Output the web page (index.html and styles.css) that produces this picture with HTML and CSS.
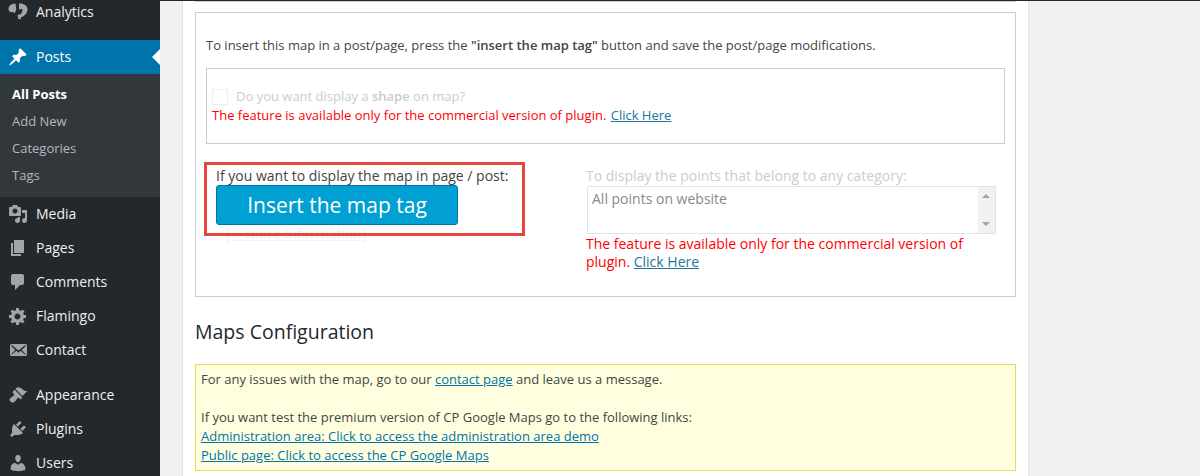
FILE: index.html
```html
<!DOCTYPE html>
<html lang="en">
<head>
<meta charset="utf-8">
<title>Maps</title>
<link rel="stylesheet" href="styles.css">
</head>
<body>
<div class="page">
<nav class="side">
  <a class="item first"><svg class="ic" viewBox="0 0 20 20"><path d="M.5 7C.5 3.500 3.500 1.500 7.500 1.700L8.300 7.500L6.800 11.200L5 10C2.500 10.500 .5 9.500 .5 7ZM11 1.500C15.500 1 19.500 3.500 19.500 7.500C19.500 11.500 16 14.500 12.500 15.500L13.500 17.300L10.300 17L9.500 12.800L12 12.500C14 11 15 9 14 7L11 7.500Z"/></svg>Analytics</a>
  <div class="current">
    <a class="item active"><svg class="ic" viewBox="0 0 20 20"><path d="M10.440 3.020l1.820-1.820 6.360 6.350-1.830 1.820c-1.050-.68-2.480-.57-3.410.36l-.75.75c-.92.93-1.040 2.350-.35 3.410l-1.830 1.820-2.410-2.410-2.800 2.790c-.42.42-3.380 2.710-3.800 2.290s1.860-3.390 2.280-3.810l2.790-2.790L4.100 9.360l1.830-1.820c1.050.69 2.480.57 3.400-.36l.75-.75c.93-.92 1.050-2.350.36-3.410z"/></svg>Posts</a>
    <ul class="sub">
      <li class="on">All Posts</li>
      <li>Add New</li>
      <li>Categories</li>
      <li>Tags</li>
    </ul>
  </div>
  <a class="item"><svg class="ic" viewBox="0 0 20 20"><path d="M13 11V4c0-.55-.45-1-1-1h-1.670L9 1H5L3.670 3H2c-.55 0-1 .45-1 1v7c0 .55.45 1 1 1h10c.55 0 1-.45 1-1zM7 4.500c1.380 0 2.500 1.120 2.500 2.500S8.380 9.500 7 9.500 4.500 8.380 4.500 7 5.620 4.500 7 4.500zM14 6h5v10.500c0 1.380-1.120 2.500-2.500 2.500S14 17.880 14 16.500s1.120-2.500 2.500-2.500c.17 0 .34.02.5.05V9h-3V6zm-4 8.050V13h2v3.500c0 1.380-1.120 2.500-2.500 2.500S7 17.880 7 16.500 8.120 14 9.500 14c.17 0 .34.02.5.05z"/></svg>Media</a>
  <a class="item"><svg class="ic" viewBox="0 0 20 20"><path d="M6 15V2h10v13H6zm-1 1h8v2H3V5h2v11z"/></svg>Pages</a>
  <a class="item"><svg class="ic" viewBox="0 0 20 20"><path d="M5 2h9c1.100 0 2 .9 2 2v7c0 1.100-.9 2-2 2h-2l-5 5v-5H5c-1.100 0-2-.9-2-2V4c0-1.100.9-2 2-2z"/></svg>Comments</a>
  <a class="item"><svg class="ic" viewBox="0 0 20 20"><path d="M18 12h-2.180c-.17.7-.44 1.350-.81 1.930l1.540 1.540-2.100 2.100-1.540-1.540c-.58.36-1.230.63-1.910.79V19H8v-2.180c-.68-.16-1.330-.43-1.910-.79l-1.540 1.540-2.120-2.120 1.540-1.540c-.36-.58-.63-1.230-.79-1.910H1V9.030h2.170c.16-.7.44-1.350.8-1.940L2.430 5.550l2.100-2.100 1.540 1.540c.58-.37 1.240-.64 1.930-.81V2h3v2.180c.68.16 1.330.43 1.910.79l1.540-1.540 2.120 2.120-1.540 1.540c.36.59.64 1.240.8 1.940H18V12zm-8.500 1.500c1.660 0 3-1.340 3-3s-1.340-3-3-3-3 1.340-3 3 1.340 3 3 3z"/></svg>Flamingo</a>
  <a class="item"><svg class="ic" viewBox="0 0 20 20"><path d="M19 14.500v-9c0-.83-.67-1.500-1.500-1.500H3.490c-.83 0-1.500.67-1.500 1.500v9c0 .83.67 1.500 1.500 1.500H17.500c.83 0 1.500-.67 1.500-1.500zm-1.310-9.110c.33.33.15.67-.03.84L13.600 9.950l3.900 4.060c.12.14.2.36.06.51-.13.16-.43.15-.56.05l-4.370-3.730-2.140 1.950-2.130-1.950-4.370 3.730c-.13.1-.43.11-.56-.05-.14-.15-.06-.37.06-.51l3.900-4.060-4.060-3.720c-.18-.17-.36-.51-.03-.84s.67-.17.95.07l6.240 5.040 6.250-5.040c.28-.24.62-.4.95-.07z"/></svg>Contact</a>
  <a class="item gap"><svg class="ic" viewBox="0 0 20 20"><path d="M14.480 11.060L7.410 3.990l1.500-1.500c.5-.56 2.300-.47 3.510.32 1.210.8 1.430 1.280 2.910 2.100 1.180.64 2.450 1.260 4.230.85zm-.71.71L6.700 4.700 4.930 6.470c-.39.39-.39 1.020 0 1.410l1.060 1.060c.39.39.39 1.030 0 1.420-.6.6-1.430 1.110-2.210 1.690-.35.26-.7.53-1.010.84C1.430 13.230.9 15.100 2.400 16.600s3.380.98 4.730-.37c.32-.31.59-.66.85-1.010.58-.78 1.090-1.610 1.690-2.210.39-.39 1.020-.39 1.410 0l1.060 1.060c.39.39 1.020.39 1.410 0z"/></svg>Appearance</a>
  <a class="item"><svg class="ic" viewBox="0 0 20 20"><path d="M13.110 4.360L9.870 7.600 8 5.730l3.240-3.240c.35-.34 1.050-.2 1.560.32.52.51.66 1.210.31 1.550zm-8 1.770l.91-1.120 9.010 9.010-1.190.84c-.71.71-2.630 1.160-3.820 1.160H6.140L4.900 17.260c-.59.59-1.540.59-2.120 0-.59-.58-.59-1.530 0-2.120l1.240-1.240v-3.880c0-1.130.4-3.190 1.090-3.890zm7.260 3.970l3.240-3.240c.34-.35 1.040-.21 1.550.31.52.51.66 1.210.31 1.550l-3.240 3.250z"/></svg>Plugins</a>
  <a class="item"><svg class="ic" viewBox="0 0 20 20"><path d="M10 9.250c-2.270 0-2.730-3.440-2.730-3.440C7 4.020 7.820 2 9.970 2c2.160 0 2.980 2.020 2.710 3.810 0 0-.45 3.440-2.680 3.440zm0 2.570L12.720 10c2.390 0 4.520 2.330 4.520 4.530v2.490s-3.650 1.130-7.240 1.130c-3.650 0-7.240-1.130-7.240-1.130v-2.490c0-2.250 1.940-4.530 4.430-4.530z"/></svg>Users</a>
</nav>
<main class="main">
  <div class="gutter"></div>
  <div class="wrap">
    <div class="prev"></div>
    <section class="panel">
      <p class="intro">To insert this map in a post/page, press the <b>"insert the map tag"</b> button and save the post/page modifications.</p>
      <div class="shape">
        <div class="muted shape-label"><span class="check"></span><span>Do you want display a <b>shape</b> on map?</span></div>
        <div class="red">The feature is available only for the commercial version of plugin. <a>Click Here</a></div>
      </div>
      <div class="cols">
        <div class="col-left">
          <a class="more">[ + more information]</a>
          <div class="lead">If you want to display the map in page / post:</div>
          <button class="btn">Insert the map tag</button>
          <div class="hl"></div>
        </div>
        <div class="col-right">
          <div class="muted cat-label">To display the points that belong to any category:</div>
          <div class="select">
            <span class="opt">All points on website</span>
            <span class="bar"><i class="up"></i><i class="down"></i></span>
          </div>
          <div class="red cat-note">The feature is available only for the commercial version of plugin. <a>Click Here</a></div>
        </div>
      </div>
    </section>
    <h2 class="title">Maps Configuration</h2>
    <section class="note">
      <div>For any issues with the map, go to our <a>contact page</a> and leave us a message.</div>
      <div class="spaced">If you want test the premium version of CP Google Maps go to the following links:</div>
      <div><a>Administration area: Click to access the administration area demo</a></div>
      <div><a>Public page: Click to access the CP Google Maps</a></div>
    </section>
  </div>
  <div class="rest"></div>
</main>
</div>
</body>
</html>
```
FILE: styles.css
```css
* { box-sizing: border-box; }
html, body { margin: 0; height: 476px; overflow: hidden; }
body { font: 13px/19px "Open Sans", sans-serif; color: #444; background: #fff; }
.page { display: flex; height: 476px; overflow: hidden; }
.side { width: 160px; flex: none; background: #23282d; color: #eee; font-size: 14px; }
.item { display: flex; align-items: flex-start; height: 34px; line-height: 33px; color: #eee; position: relative; }
.item.first { margin-top: -5px; margin-bottom: 11px; }
.item.gap { margin-top: 11px; }
.ic { width: 20px; height: 20px; margin: 7px 8px 0; fill: #a0a5aa; flex: none; }
.active { background: #0073aa; color: #fff; }
.active .ic { fill: #fff; }
.active::after { content: ""; position: absolute; right: 0; top: 9px; border: 8px solid transparent; border-right-color: #fff; border-left: 0; }
.sub { list-style: none; margin: 0; padding: 7px 0 8px; background: #32373c; font-size: 13px; color: #b4b9be; }
.sub li { height: 27px; line-height: 27px; padding-left: 12px; }
.sub .on { color: #fff; font-weight: 700; }
.main { flex: 1; display: flex; min-width: 0; border-top: 1px solid #23282d; }
.gutter { width: 23px; flex: none; background: #f1f1f1; border-right: 1px solid #e5e5e5; }
.wrap { width: 845px; flex: none; padding-left: 12px; background: #fff; }
.prev { width: 821px; height: 1px; margin-bottom: 10px; background: #ccc; }
.rest { flex: 1; background: #f1f1f1; border-left: 1px solid #e5e5e5; }
.panel { width: 821px; height: 285px; border: 1px solid #ccc; padding: 23px 10px 0; background: #fff; }
.intro { margin: 0; height: 19px; }
.intro b { font-weight: 600; }
.shape { margin-top: 13px; height: 76px; border: 1px solid #ccc; padding: 18px 5px 0; }
.muted { color: #ccc; }
.shape-label { display: flex; align-items: center; height: 19px; white-space: nowrap; }
.shape-label b { font-weight: 600; }
.check { width: 16px; height: 16px; border: 1px solid #eee; margin-right: 8px; flex: none; }
.red { color: #f00; }
.red a, .note a { color: #0073aa; text-decoration: underline; }
.red a { color: #21759b; }
.shape .red a { margin-left: 1px; }
.cols { display: flex; }
.col-left { position: relative; width: 380px; padding: 22px 0 0 10px; }
.hl { position: absolute; left: -2px; top: 18px; width: 321px; height: 74px; border: 3px solid #e8453c; }
.lead { font-size: 14px; height: 19px; line-height: 19px; white-space: nowrap; position: relative; }
.btn { display: block; position: relative; width: 242px; height: 40px; margin: 0; padding: 0; border: 1px solid #0073aa; border-radius: 3px; background: #00a0d2; color: #fff; font: 21px/38px "Open Sans", sans-serif; }
.more { position: absolute; left: 20px; top: 80px; color: #e8f3f8; font-size: 14px; text-decoration: underline; white-space: nowrap; }
.col-right { width: 410px; padding-top: 22px; }
.cat-label { font-size: 14px; height: 20px; line-height: 19px; white-space: nowrap; }
.select { display: flex; justify-content: space-between; width: 409px; height: 48px; margin-left: 1px; border: 1px solid #e3e3e3; font-size: 14px; color: #888; }
.opt { padding: 2px 0 0 4px; }
.bar { width: 17px; background: #f1f1f1; position: relative; display: block; }
.bar i { position: absolute; left: 4px; border: 4px solid transparent; }
.bar .up { top: 3px; border-bottom-color: #a3a3a3; }
.bar .down { bottom: 3px; border-top-color: #a3a3a3; }
.cat-note { font-size: 14px; line-height: 18px; margin-top: 1px; }
.title { margin: 20px 0 0; height: 29px; font: 400 19.5px/29px "Open Sans", sans-serif; color: #23282d; }
.note { width: 821px; height: 107px; margin-top: 18px; border: 1px solid #e6db55; background: #ffffe0; padding: 5px 5px 0; }
.spaced { margin-top: 19px; }
```
